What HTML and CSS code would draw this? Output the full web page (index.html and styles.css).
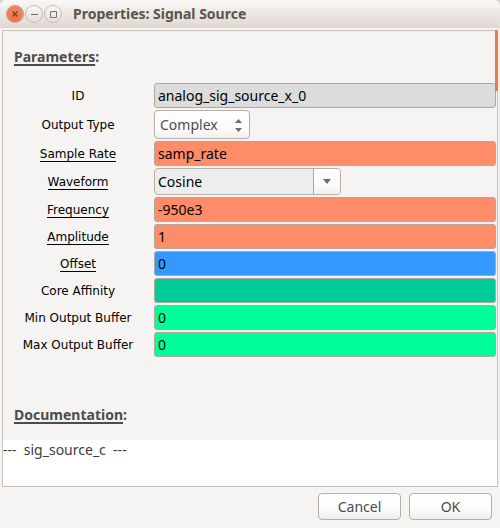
FILE: index.html
```html
<!DOCTYPE html>
<html lang="en">
<head>
<meta charset="utf-8">
<title>Properties: Signal Source</title>
<link rel="stylesheet" href="styles.css">
</head>
<body>
<div class="window">
  <header class="titlebar">
    <button class="wm close" type="button" aria-label="Close"><svg viewBox="0 0 18 18"><path d="M6.5 6.5l5 5M11.5 6.5l-5 5"/></svg></button>
    <button class="wm" type="button" aria-label="Minimize"><svg viewBox="0 0 18 18"><path d="M6 9.500h7"/></svg></button>
    <button class="wm" type="button" aria-label="Maximize"><svg viewBox="0 0 18 18"><path d="M6.500 6.500h6v6h-6z"/></svg></button>
    <h1 class="title">Properties: Signal Source</h1>
  </header>
  <form class="dialog">
    <div class="frame">
      <h2 class="heading"><span class="line">Parameters</span>:</h2>
      <div class="params">
        <label for="id">ID</label>
        <input class="field readonly" id="id" type="text" value="analog_sig_source_x_0" readonly>
        <label for="type">Output Type</label>
        <div class="pick type">
          <select id="type"><option>Complex</option></select>
          <svg class="spin" viewBox="0 0 7 13"><path d="M0 4L3.500 0L7 4zM0 9h7L3.500 13z"/></svg>
        </div>
        <label for="rate"><span class="under">Sample Rate</span></label>
        <input class="field real" id="rate" type="text" value="samp_rate">
        <label for="wave"><span class="under">Waveform</span></label>
        <div class="pick wave">
          <select id="wave"><option>Cosine</option></select>
          <span class="drop"><svg viewBox="0 0 8 5"><path d="M0 0h8L4 5z"/></svg></span>
        </div>
        <label for="freq"><span class="under">Frequency</span></label>
        <input class="field real" id="freq" type="text" value="-950e3">
        <label for="amp"><span class="under">Amplitude</span></label>
        <input class="field real" id="amp" type="text" value="1">
        <label for="offset"><span class="under">Offset</span></label>
        <input class="field complex" id="offset" type="text" value="0">
        <label for="core">Core Affinity</label>
        <input class="field vector" id="core" type="text" value="">
        <label for="min">Min Output Buffer</label>
        <input class="field int" id="min" type="text" value="0">
        <label for="max">Max Output Buffer</label>
        <input class="field int" id="max" type="text" value="0">
      </div>
      <h2 class="heading docs-heading"><label for="docs"><span class="line">Documentation</span>:</label></h2>
      <textarea class="docs" id="docs" readonly>---  sig_source_c  ---</textarea>
      <div class="scroll"></div>
    </div>
    <div class="actions">
      <button type="button">Cancel</button>
      <button type="button">OK</button>
    </div>
  </form>
</div>
</body>
</html>
```
FILE: styles.css
```css
* {
  box-sizing: border-box;
}

body {
  margin: 0;
  background: #d5d1d3;
  color: #4c4c4c;
  font: 14px/20px "Noto Sans", "Open Sans", sans-serif;
}

input,
select,
button,
textarea {
  margin: 0;
  font: inherit;
  color: inherit;
}

.window {
  display: flex;
  flex-direction: column;
  min-height: 100vh;
  background: #f5f4f2;
  border-radius: 6px 6px 0 0;
}

.titlebar {
  display: flex;
  align-items: center;
  gap: 1px;
  height: 28px;
  padding: 0 6px;
  background: linear-gradient(#faf9f7, #f0ece8 35%, #dfd8d1);
  border-radius: 6px 6px 0 0;
}

.wm {
  width: 18px;
  height: 18px;
  padding: 0;
  border: 1px solid #c6beb6;
  border-radius: 50%;
  background: linear-gradient(#faf8f6, #e5dfd9);
}

.wm svg {
  display: block;
  width: 18px;
  height: 18px;
  margin: -1px;
  fill: none;
  stroke: #77706a;
}

.close {
  border-color: #d29a84;
  background: radial-gradient(circle at 50% 75%, #f47343, #f18a66);
}

.close svg {
  stroke: #70412e;
  stroke-width: 1.3;
}

.title {
  margin: 0 0 0 10px;
  font-size: 14px;
  line-height: 20px;
  color: #5a544e;
}

.dialog {
  display: flex;
  flex: 1;
  flex-direction: column;
  padding: 2px;
}

.frame {
  position: relative;
  display: flex;
  flex: 1;
  flex-direction: column;
  border: 1px solid #c9c0b8;
}

.heading {
  margin: 16px 11px;
  font-size: 14px;
  line-height: 20px;
}

.line {
  text-decoration: underline;
  text-decoration-skip-ink: none;
  text-decoration-thickness: 2px;
  text-underline-offset: 2px;
}

.params {
  display: grid;
  grid-template-columns: 150px 1fr;
  column-gap: 1px;
  row-gap: 2px;
  align-items: center;
  padding-right: 1px;
  color: #000;
}

.params label {
  font: 12px/16px "DejaVu Sans", sans-serif;
  text-align: center;
}

.under {
  border-bottom: 1px solid #000;
}

.field {
  width: 100%;
  height: 25px;
  padding: 0 3px;
  border: 1px solid #b0a79e;
  border-radius: 3px;
}

.readonly {
  background: #dcdcdc;
}

.real {
  background: #ff8c69;
}

.complex {
  background: #3399ff;
}

.vector {
  background: #00cc99;
}

.int {
  background: #00ff99;
}

.pick {
  position: relative;
  display: flex;
  justify-self: start;
  overflow: hidden;
  border: 1px solid #b9afa6;
  border-radius: 4px;
}

.pick select {
  flex: 1;
  border: 0;
  background: none;
  appearance: none;
}

.type {
  width: 96px;
  height: 29px;
  background: linear-gradient(#fff, #fcfcfb 65%, #f2f0ee);
  color: #4c4c4c;
}

.type select {
  padding: 0 5px;
}

.spin {
  position: absolute;
  top: 8px;
  right: 7px;
  width: 7px;
  height: 13px;
  fill: #6c6c6c;
  pointer-events: none;
}

.wave {
  width: 187px;
  height: 27px;
  background: #ededed;
}

.wave select {
  padding: 0 27px 0 3px;
}

.drop {
  position: absolute;
  top: 0;
  right: 0;
  bottom: 0;
  display: grid;
  place-items: center;
  width: 27px;
  border-left: 1px solid #b0a79e;
  background: linear-gradient(#fff, #fcfcfb 65%, #f2f0ee);
  pointer-events: none;
}

.drop svg {
  width: 8px;
  height: 5px;
  fill: #6c6c6c;
}

.docs-heading {
  margin-top: 48px;
  margin-bottom: 15px;
}

.docs {
  flex: 1;
  width: 100%;
  min-height: 46px;
  padding: 0;
  border: 0;
  background: #fff;
  color: #3c3c3c;
  resize: none;
}

.scroll {
  position: absolute;
  top: -1px;
  right: -1px;
  width: 3px;
  height: 61px;
  background: #f07746;
}

.actions {
  display: flex;
  justify-content: flex-end;
  gap: 8px;
  padding: 6px;
}

.actions button {
  width: 83px;
  height: 27px;
  padding: 0;
  border: 1px solid #b9afa6;
  border-radius: 4px;
  background: linear-gradient(#fff, #fcfcfb 60%, #f0eeec);
}
```
